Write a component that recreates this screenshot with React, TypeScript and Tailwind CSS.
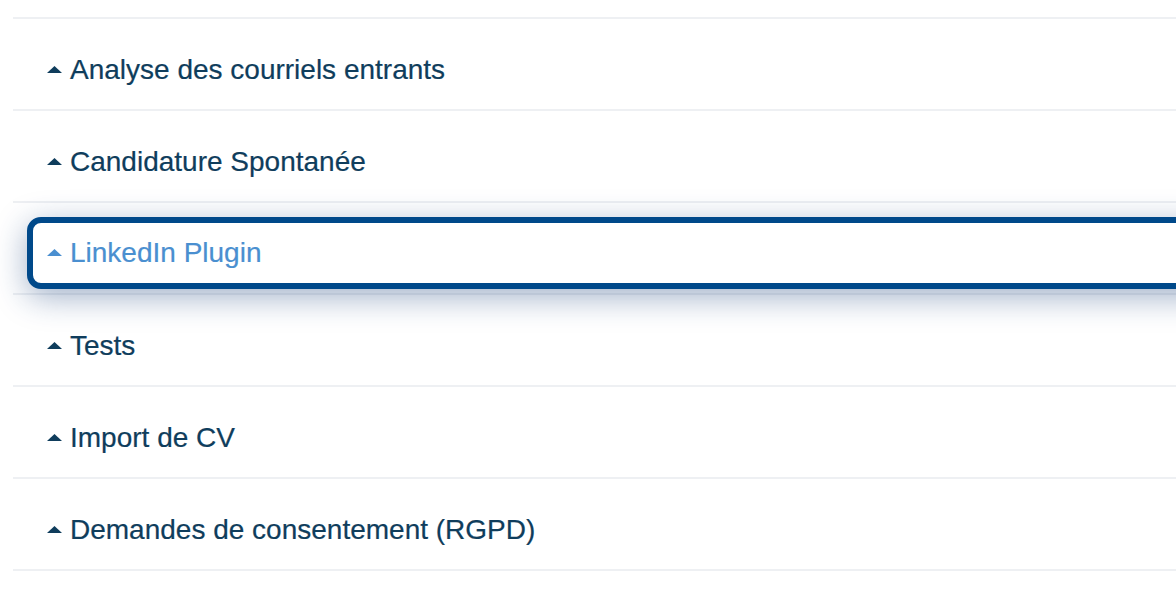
import React from 'react';

const items = [
  'Analyse des courriels entrants',
  'Candidature Spontanée',
  'LinkedIn Plugin',
  'Tests',
  'Import de CV',
  'Demandes de consentement (RGPD)',
];

function Caret({ className }: { className: string }) {
  return (
    <svg viewBox="0 0 15 7" className={className}>
      <path d="M0 7 L7.5 0 L15 7 Z" fill="currentColor" />
    </svg>
  );
}

export default function App() {
  const active = 'LinkedIn Plugin';
  return (
    <div className="w-[1176px] h-[590px] overflow-hidden bg-white pt-[17px] pl-[13px] font-['Liberation_Sans',Arial,sans-serif]">
      <div className="border-b-2 border-[#eef0f3]">
        {items.map((label) => {
          const isActive = label === active;
          return (
            <div key={label} className="h-[92px] border-t-2 border-[#eef0f3] flex">
              {isActive ? (
                <div className="relative z-10 mt-[14px] mb-[4px] ml-[14px] w-[1300px] shrink-0 flex items-center pl-[14px] border-[6px] border-[#00498a] rounded-[14px] bg-white shadow-[0_8px_32px_rgba(20,60,120,0.4)]">
                  <Caret className="w-[15px] h-[7px] text-[#4a8fd0] mr-[8px] -mt-[1px]" />
                  <span className="text-[28px] leading-none text-[#4a8fd0] [-webkit-text-stroke:0.2px_#4a8fd0]">{label}</span>
                </div>
              ) : (
                <div className="flex items-center pl-[34px] pt-[12px] w-full">
                  <Caret className="w-[15px] h-[7px] text-[#0f3d5c] mr-[8px] -mt-[1px]" />
                  <span className="text-[28px] leading-none text-[#0f3d5c] [-webkit-text-stroke:0.2px_#0f3d5c]">{label}</span>
                </div>
              )}
            </div>
          );
        })}
      </div>
    </div>
  );
}
